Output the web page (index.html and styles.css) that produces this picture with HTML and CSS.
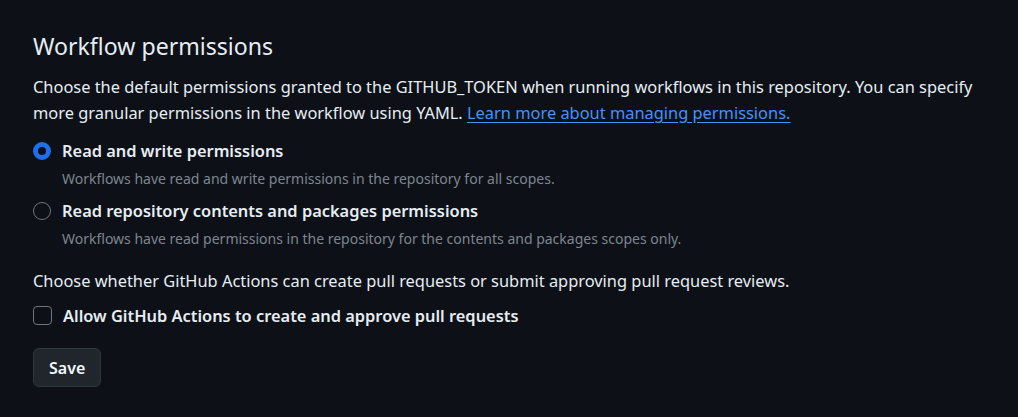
FILE: index.html
```html
<!DOCTYPE html>
<html lang="en">
<head>
  <meta charset="UTF-8">
  <title>Workflow permissions</title>
  <link rel="stylesheet" href="styles.css">
</head>
<body>
  <section class="settings">
    <h2 class="settings-title">Workflow permissions</h2>
    <p class="settings-note">
      Choose the default permissions granted to the GITHUB_TOKEN when running workflows in this repository. You can specify
      more granular permissions in the workflow using YAML. <a href="#" class="link">Learn more about managing permissions.</a>
    </p>

    <label class="option">
      <input type="radio" name="perm" class="radio" checked>
      <span class="option-body">
        <span class="option-label">Read and write permissions</span>
        <span class="option-hint">Workflows have read and write permissions in the repository for all scopes.</span>
      </span>
    </label>

    <label class="option">
      <input type="radio" name="perm" class="radio">
      <span class="option-body">
        <span class="option-label">Read repository contents and packages permissions</span>
        <span class="option-hint">Workflows have read permissions in the repository for the contents and packages scopes only.</span>
      </span>
    </label>

    <p class="settings-note spaced">Choose whether GitHub Actions can create pull requests or submit approving pull request reviews.</p>

    <label class="option">
      <input type="checkbox" class="check">
      <span class="option-label">Allow GitHub Actions to create and approve pull requests</span>
    </label>

    <button class="btn">Save</button>
  </section>
</body>
</html>
```

FILE: styles.css
```css
* {
  margin: 0;
  padding: 0;
  box-sizing: border-box;
}

body {
  background: #0d1117;
  color: #e6edf3;
  font-family: 'Noto Sans', 'Liberation Sans', sans-serif;
  font-size: 16.4px;
  line-height: 1.5;
}

.settings {
  width: 990px;
  padding: 28px 0 0 33px;
}

.settings-title {
  font-size: 23.1px;
  font-weight: 400;
  line-height: 36px;
  margin-bottom: 10px;
}

.settings-note {
  line-height: 26px;
  margin-bottom: 13px;
}

.settings-note.spaced {
  margin-top: 13px;
  margin-bottom: 10px;
}

.link {
  color: #4493f8;
  text-decoration: underline;
  text-underline-offset: 3px;
}

.option {
  display: flex;
  align-items: flex-start;
  gap: 11px;
  margin-bottom: 4px;
}

.option-body {
  display: flex;
  flex-direction: column;
}

.option-label {
  font-weight: 600;
  line-height: 24px;
}

.option-hint {
  font-size: 14px;
  color: #7d8590;
  line-height: 32px;
}

.radio,
.check {
  appearance: none;
  width: 18px;
  height: 18px;
  margin-top: 3px;
  flex-shrink: 0;
  border: 1px solid #6e7681;
  background: transparent;
}

.radio {
  border-radius: 50%;
}

.radio:checked {
  border: 5px solid #1f6feb;
}

.check {
  width: 19px;
  height: 19px;
  margin-top: 2px;
  border-radius: 4px;
}

.btn {
  margin-top: 16px;
  padding: 0 15px;
  height: 39px;
  font-family: inherit;
  font-size: 16px;
  font-weight: 600;
  color: #f0f6fc;
  background: #21262d;
  border: 1px solid #30363d;
  border-radius: 6px;
}
```
